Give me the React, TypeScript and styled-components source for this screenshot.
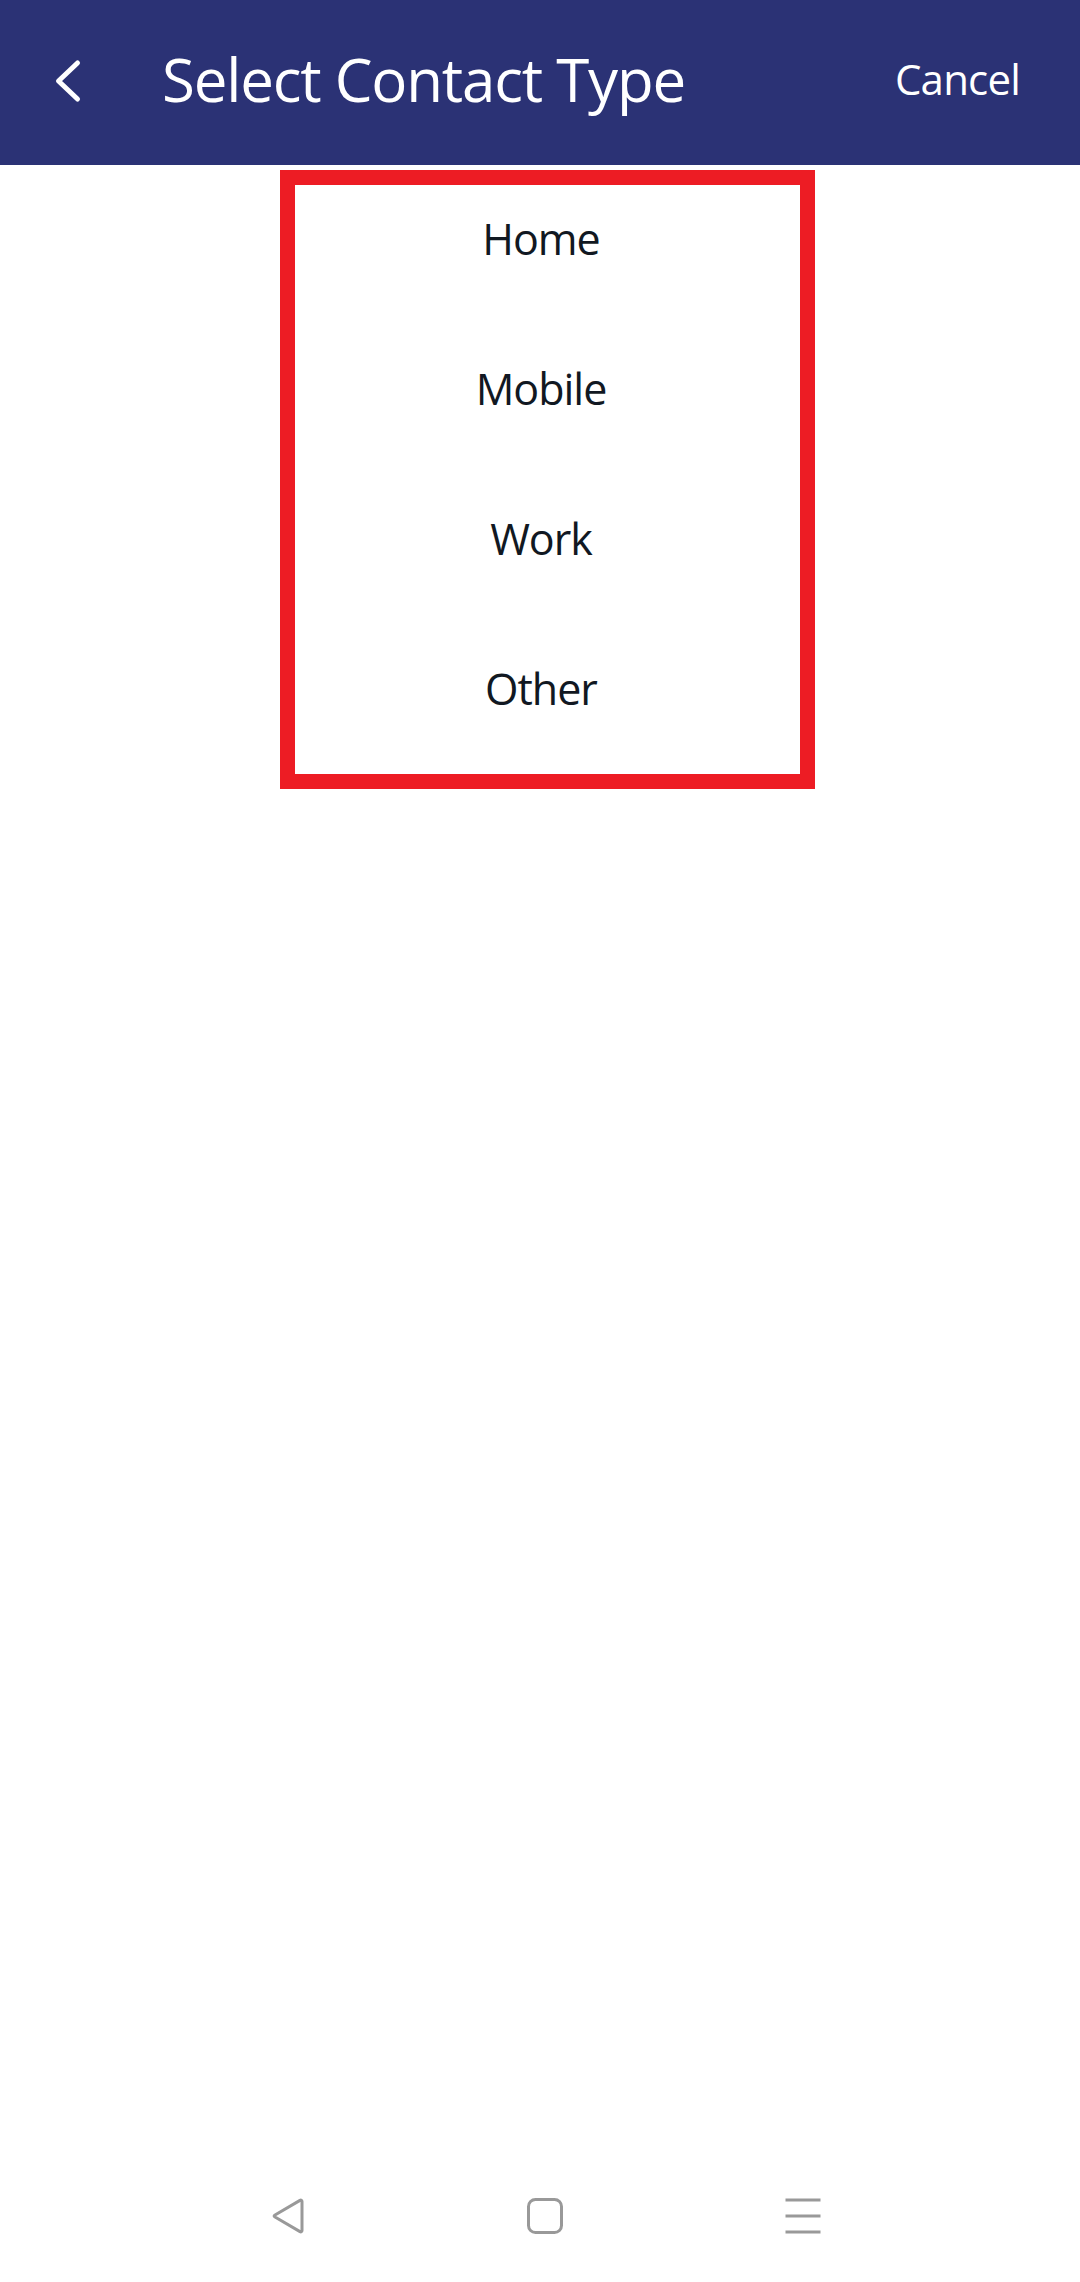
import React from 'react'
import styled, { createGlobalStyle } from 'styled-components'

const GlobalStyle = createGlobalStyle`
  html, body {
    margin: 0;
    padding: 0;
    background: #ffffff;
    font-family: 'Open Sans', 'Noto Sans', sans-serif;
  }
  * {
    box-sizing: border-box;
  }
`

const Screen = styled.div`
  display: flex;
  flex-direction: column;
  width: 1080px;
  min-height: 2282px;
  background: #ffffff;
`

const Toolbar = styled.header`
  display: flex;
  align-items: center;
  height: 165px;
  padding: 0 60px 7px 48px;
  background: #2b3275;
  color: #ffffff;
`

const BackButton = styled.button`
  display: flex;
  width: 40px;
  height: 52px;
  margin-top: 4px;
  padding: 0;
  border: 0;
  background: none;
  cursor: pointer;
`

const Title = styled.h1`
  flex: 1;
  margin: 0 0 0 74px;
  font-size: 60px;
  font-weight: 400;
  line-height: 82px;
  letter-spacing: -1.2px;
`

const CancelButton = styled.button`
  padding: 0;
  border: 0;
  background: none;
  color: #ffffff;
  font-family: inherit;
  font-size: 42px;
  line-height: 58px;
  letter-spacing: -0.8px;
  cursor: pointer;
`

const Content = styled.main`
  flex: 1;
  padding: 5px 0 0 280px;
`

const Highlight = styled.div`
  width: 535px;
  height: 619px;
  border: 15px solid #ed1c24;
`

const TypeList = styled.ul`
  display: flex;
  flex-direction: column;
  gap: 90px;
  margin: 0;
  padding: 24px 13px 55px 0;
  list-style: none;
`

const TypeItem = styled.li`
  height: 60px;
  color: #111822;
  font-size: 43px;
  line-height: 60px;
  letter-spacing: -1px;
  text-align: center;
  cursor: pointer;
`

const NavBar = styled.nav`
  display: flex;
  align-items: center;
  justify-content: center;
  gap: 222px;
  height: 132px;
  padding-left: 9px;
  background: #ffffff;
`

const NavIcon = styled.svg`
  display: block;
  width: 36px;
  height: 36px;
  fill: none;
  stroke: #999999;
  stroke-width: 3;
  stroke-linejoin: round;
  stroke-linecap: round;
`

const contactTypes = ['Home', 'Mobile', 'Work', 'Other']

export default function App() {
  return (
    <>
      <GlobalStyle />
      <Screen>
        <Toolbar>
          <BackButton aria-label="Back">
            <svg width="40" height="52" viewBox="0 0 40 52" fill="none">
              <path
                d="M29.5 8 L10.5 26 L29.5 44"
                stroke="#ffffff"
                strokeWidth="5"
                strokeLinecap="round"
                strokeLinejoin="round"
              />
            </svg>
          </BackButton>
          <Title>Select Contact Type</Title>
          <CancelButton>Cancel</CancelButton>
        </Toolbar>
        <Content>
          <Highlight>
            <TypeList>
              {contactTypes.map((type) => (
                <TypeItem key={type}>{type}</TypeItem>
              ))}
            </TypeList>
          </Highlight>
        </Content>
        <NavBar>
          <NavIcon viewBox="0 0 36 36">
            <path d="M33 3.5 C33 2.2 32 1.8 31 2.4 L6 17 C4.8 17.7 4.8 18.3 6 19 L31 33.6 C32 34.2 33 33.8 33 32.5 Z" />
          </NavIcon>
          <NavIcon viewBox="0 0 36 36">
            <rect x="1.5" y="1.5" width="33" height="33" rx="7" />
          </NavIcon>
          <NavIcon viewBox="0 0 36 36">
            <path d="M0.5 2 H35.5 M0.5 18 H35.5 M0.5 34 H35.5" strokeLinecap="butt" />
          </NavIcon>
        </NavBar>
      </Screen>
    </>
  )
}
